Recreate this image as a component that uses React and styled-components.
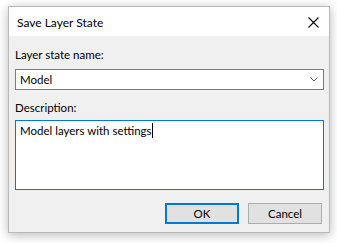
import React from 'react';
import styled, { createGlobalStyle } from 'styled-components';

const GlobalStyle = createGlobalStyle`
  html, body {
    margin: 0;
    padding: 0;
    background: #ffffff;
  }
  body {
    width: 337px;
    height: 243px;
    overflow: hidden;
    font-family: Lato, 'Noto Sans', sans-serif;
    font-size: 11.5px;
  }
`;

const Window = styled.div`
  margin: 6px 0 0 8px;
  width: 322px;
  height: 227px;
  box-sizing: border-box;
  border: 1px solid #b9b9b9;
  box-shadow: 0 2px 10px rgba(0, 0, 0, 0.28);
  background: #f0f0f0;
  display: flex;
  flex-direction: column;
`;

const TitleBar = styled.div`
  height: 29px;
  background: #ffffff;
  display: flex;
  align-items: center;
  justify-content: space-between;
  padding: 1px 9px 0 8px;
  box-sizing: border-box;
  font-size: 12px;
  color: #000;
`;

const Close = styled.svg`
  width: 11px;
  height: 11px;
  margin-right: 1px;
`;

const Body = styled.div`
  flex: 1;
  display: flex;
  flex-direction: column;
  padding: 11px 5px 0 6px;
`;

const Label = styled.div`
  line-height: 16px;
  color: #000;
  margin-bottom: ${p => p.$gap}px;
`;

const Combo = styled.div`
  height: 21px;
  box-sizing: border-box;
  border: 1px solid #7a7a7a;
  background: #fff;
  display: flex;
  align-items: center;
  justify-content: space-between;
  padding: 0 5px 0 4px;
  margin-bottom: 10px;
`;

const TextArea = styled.div`
  height: 70px;
  box-sizing: border-box;
  border: 1px solid #0078d7;
  background: #fff;
  padding: 2px 4px;
  line-height: 16px;
`;

const Caret = styled.span`
  display: inline-block;
  width: 1px;
  height: 15px;
  background: #000;
  vertical-align: -3px;
`;

const Buttons = styled.div`
  display: flex;
  justify-content: flex-end;
  gap: 9px;
  margin-top: 13px;
  padding-right: 2px;
`;

const Button = styled.div`
  width: 74px;
  height: 21px;
  box-sizing: border-box;
  border: ${p => (p.$primary ? '2px solid #0078d7' : '1px solid #adadad')};
  background: #e1e1e1;
  display: flex;
  align-items: center;
  justify-content: center;
  color: #000;
`;

export default function App() {
  return (
    <>
      <GlobalStyle />
      <Window>
        <TitleBar>
          <span>Save Layer State</span>
          <Close viewBox="0 0 11 11">
            <path d="M0.5 0.5 L10.5 10.5 M10.5 0.5 L0.5 10.5" stroke="#000" strokeWidth="1.1" fill="none" />
          </Close>
        </TitleBar>
        <Body>
          <Label $gap={6}>Layer state name:</Label>
          <Combo>
            <span>Model</span>
            <svg width="8" height="5" viewBox="0 0 8 5">
              <path d="M0.5 0.5 L4 4 L7.5 0.5" stroke="#555" strokeWidth="1" fill="none" />
            </svg>
          </Combo>
          <Label $gap={4}>Description:</Label>
          <TextArea>
            Model layers with settings<Caret />
          </TextArea>
          <Buttons>
            <Button $primary>OK</Button>
            <Button>Cancel</Button>
          </Buttons>
        </Body>
      </Window>
    </>
  );
}
